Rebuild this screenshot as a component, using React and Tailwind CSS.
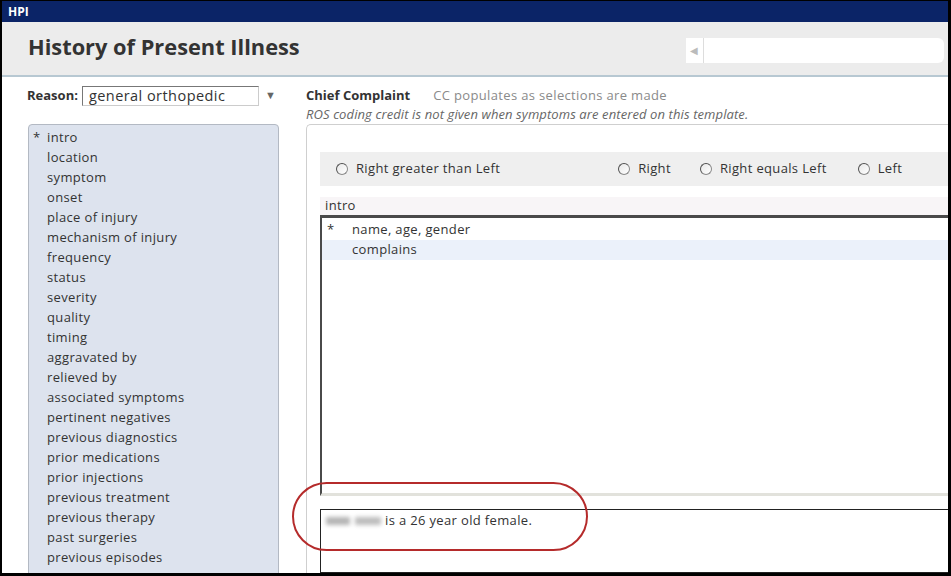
import React from "react";

const items = [
  "intro","location","symptom","onset","place of injury","mechanism of injury","frequency","status","severity","quality","timing","aggravated by","relieved by","associated symptoms","pertinent negatives","previous diagnostics","prior medications","prior injections","previous treatment","previous therapy","past surgeries","previous episodes","previous injury",
];

function Radio({ label, className = "" }) {
  return (
    <div className={"flex items-center " + className}>
      <span className="w-[12px] h-[12px] rounded-full border border-[#8a8a8a] bg-gradient-to-br from-[#e8e8e8] to-[#ffffff] border-l-[#505050] border-t-[#505050]" />
      <span className="ml-[8px]">{label}</span>
    </div>
  );
}

export default function App() {
  return (
    <div className="w-[951px] h-[576px] overflow-hidden bg-black pl-[2px] pr-[3px] pb-[3px] pt-[1px]" style={{ fontFamily: '"Open Sans", "Noto Sans", sans-serif' }}>
      <div className="h-full flex flex-col bg-white relative overflow-hidden text-[#333] text-[13px] tracking-[0.35px]">
        <div className="h-[21px] shrink-0 bg-[#0b2467] flex items-center pl-[6px] text-white font-bold text-[12px] tracking-normal">HPI</div>
        <div className="h-[55px] shrink-0 bg-[#ececec] border-b-2 border-[#b7c8d2] flex items-center justify-between pl-[26px] pr-[4px]">
          <div className="text-[21.8px] font-bold text-[#333] tracking-normal -mt-[2px]">History of Present Illness</div>
          <div className="flex items-center h-[25px] w-[258px] bg-white mt-[4px] rounded-r-[6px]">
            <div className="w-[18px] h-full flex items-center justify-center text-[#bbb] text-[10px] border-r border-[#ddd]">◀</div>
          </div>
        </div>
        <div className="flex-1 flex relative min-h-0">
          <div className="w-[304px] shrink-0 pl-[25px] pt-[9px] flex flex-col">
            <div className="flex items-center h-[19px]">
              <span className="font-bold tracking-normal">Reason:</span>
              <div className="ml-[4px] w-[177px] h-[20px] border border-[#777] border-r-[#ccc] border-b-[#ccc] flex items-center pl-[6px] text-[14.5px] tracking-[0.45px] whitespace-nowrap">general orthopedic</div>
              <span className="ml-[6px] text-[#666] text-[11px]">▼</span>
            </div>
            <div className="mt-[19px] ml-[1px] w-[251px] flex-1 bg-[#dde3ee] border border-[#b3b9c3] rounded-t-[4px] pt-[3px]">
              {items.map((t, i) => (
                <div key={t} className="h-[20px] flex items-center">
                  <span className="w-[18px] pl-[4px]">{i === 0 ? "*" : ""}</span>
                  <span>{t}</span>
                </div>
              ))}
            </div>
          </div>
          <div className="flex-1 pt-[9px] flex flex-col min-w-0">
            <div className="flex items-center h-[19px] whitespace-nowrap">
              <span className="font-bold tracking-normal">Chief Complaint</span>
              <span className="ml-[23px] text-[#8a8a8a]">CC populates as selections are made</span>
            </div>
            <div className="italic text-[13px] tracking-[0.1px] text-[#666] h-[19px] flex items-center whitespace-nowrap">ROS coding credit is not given when symptoms are entered on this template.</div>
            <div className="flex-1 border-l border-t border-[#cfcfcf] rounded-tl-[5px] pl-[13px] pt-[27px] flex flex-col">
              <div className="h-[34px] bg-[#efefef] flex items-center pl-[16px] whitespace-nowrap">
                <Radio label="Right greater than Left" />
                <Radio label="Right" className="ml-[118px]" />
                <Radio label="Right equals Left" className="ml-[29px]" />
                <Radio label="Left" className="ml-[31px]" />
              </div>
              <div className="mt-[11px] h-[18px] bg-[#f8f5f7] flex items-center pl-[5px]">intro</div>
              <div className="h-[281px] border-t-[3px] border-l-[2px] border-[#4a4a4a] border-b-[3px] border-b-[#e2e2dc] pt-[2px]">
                <div className="h-[20px] flex items-center"><span className="w-[30px] pl-[5px]">*</span>name, age, gender</div>
                <div className="h-[20px] flex items-center bg-[#ebf1fa]"><span className="w-[30px]" />complains</div>
              </div>
              <div className="mt-[13px] flex-1 border border-[#222] border-r-0 pt-[3px] pl-[2px]">
                <div className="h-[16px] flex items-center whitespace-nowrap">
                  <span className="w-[62px] h-[16px] flex items-center gap-[5px] pl-[3px] blur-[2px]">
                    <span className="w-[24px] h-[8px] bg-[#b4b4b4]" />
                    <span className="w-[26px] h-[8px] bg-[#bdbdbd]" />
                  </span>
                  <span>is a 26 year old female.</span>
                </div>
              </div>
            </div>
          </div>
          <div className="absolute left-[290px] top-[405px] w-[296px] h-[69px] border-2 border-[#b52b2b] rounded-[35px]" />
        </div>
      </div>
    </div>
  );
}
